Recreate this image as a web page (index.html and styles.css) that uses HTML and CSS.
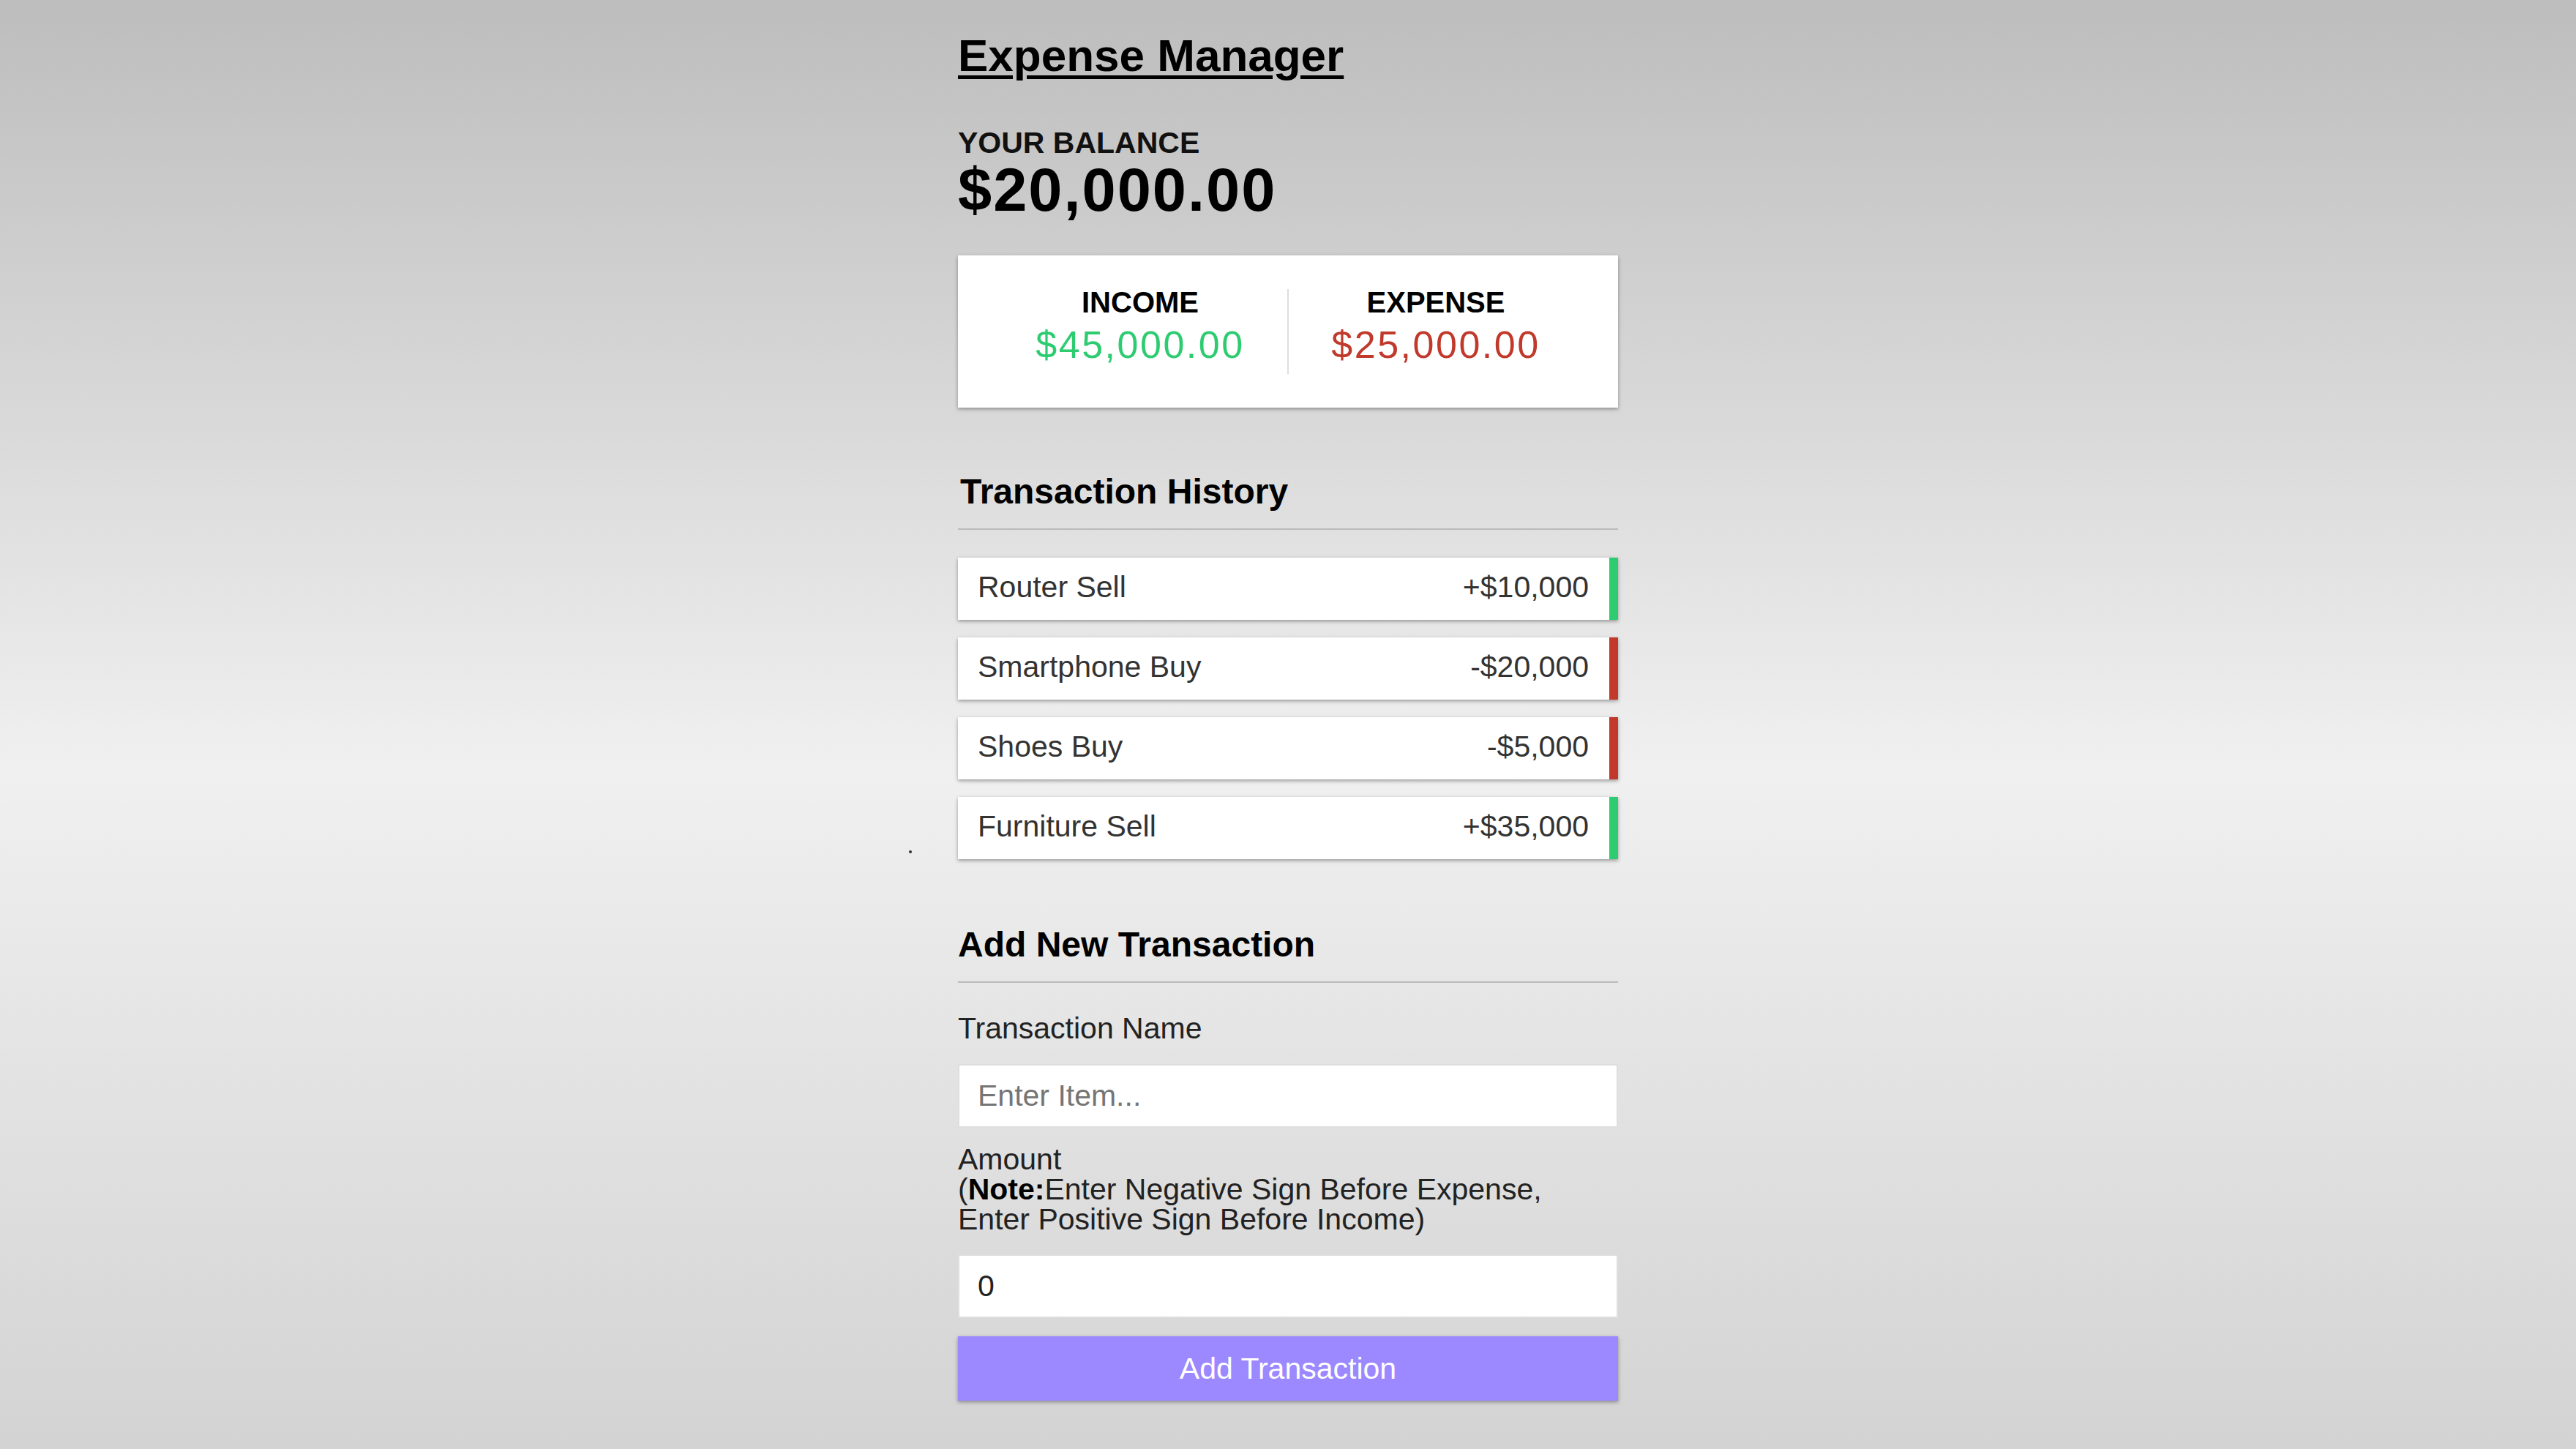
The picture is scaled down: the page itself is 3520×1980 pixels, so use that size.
FILE: index.html
```html
<!DOCTYPE html>
<html lang="en">
<head>
<meta charset="utf-8">
<title>Expense Manager</title>
<link rel="stylesheet" href="styles.css">
</head>
<body>
<span class="speck"></span>
<main class="app">
  <h2 class="app-title">Expense Manager</h2>

  <h4 class="balance-label">YOUR BALANCE</h4>
  <h1 class="balance">$20,000.00</h1>

  <section class="summary">
    <div class="summary-col summary-col--divided">
      <h4 class="summary-label">INCOME</h4>
      <p class="money money--plus">$45,000.00</p>
    </div>
    <div class="summary-col">
      <h4 class="summary-label">EXPENSE</h4>
      <p class="money money--minus">$25,000.00</p>
    </div>
  </section>

  <h3 class="section-title section-title--history">Transaction History</h3>
  <ul class="list">
    <li class="item item--plus"><span>Router Sell</span><span>+$10,000</span></li>
    <li class="item item--minus"><span>Smartphone Buy</span><span>-$20,000</span></li>
    <li class="item item--minus"><span>Shoes Buy</span><span>-$5,000</span></li>
    <li class="item item--plus"><span>Furniture Sell</span><span>+$35,000</span></li>
  </ul>

  <h3 class="section-title section-title--add">Add New Transaction</h3>
  <form class="form">
    <label class="label label--name" for="text">Transaction Name</label>
    <input class="field" type="text" id="text" placeholder="Enter Item...">
    <label class="label label--amount" for="amount"><span class="label-line">Amount</span><span class="label-line">(<b>Note:</b>Enter Negative Sign Before Expense,</span><span class="label-line">Enter Positive Sign Before Income)</span></label>
    <input class="field" type="text" id="amount" value="0">
    <button class="btn" type="button">Add Transaction</button>
  </form>
</main>
</body>
</html>
```
FILE: styles.css
```css
* {
  box-sizing: border-box;
}

html,
body {
  margin: 0;
  padding: 0;
}

body {
  min-height: 100vh;
  background: linear-gradient(to bottom, #bdbdbd 0%, #f0f0f0 53%, #d3d3d3 100%);
  font-family: "Liberation Sans", Arial, sans-serif;
  color: #333;
  overflow: hidden;
}

.speck {
  position: absolute;
  left: 1242px;
  top: 1162px;
  width: 4px;
  height: 4px;
  border-radius: 50%;
  background: #333;
}

.app {
  width: 902px;
  margin: 0 auto;
  padding-top: 41px;
}

.app-title {
  margin: 0;
  font-size: 62px;
  line-height: 70px;
  font-weight: bold;
  color: #000;
  text-decoration: underline;
  text-decoration-thickness: 5px;
  text-underline-offset: 6px;
}

.balance-label {
  margin: 64px 0 0;
  font-size: 41px;
  line-height: 40px;
  font-weight: bold;
  color: #111;
}

.balance {
  margin: 4px 0 0;
  font-size: 83px;
  line-height: 82px;
  font-weight: bold;
  letter-spacing: 2px;
  color: #000;
}

.summary {
  display: flex;
  margin-top: 48px;
  height: 208px;
  padding: 46px 48px;
  background: #fff;
  box-shadow: 0 2px 7px rgba(0, 0, 0, 0.14), 0 2px 4px rgba(0, 0, 0, 0.24);
}

.summary-col {
  flex: 1;
  text-align: center;
}

.summary-col--divided {
  border-right: 2px solid #dedede;
}

.summary-label {
  margin: 0;
  font-size: 40px;
  line-height: 36px;
  font-weight: bold;
  color: #000;
}

.money {
  margin: 0;
  font-size: 52px;
  line-height: 80px;
  letter-spacing: 2.5px;
}

.money--plus {
  color: #2ecc71;
}

.money--minus {
  color: #c0392b;
}

.section-title {
  margin: 0;
  padding-bottom: 24px;
  border-bottom: 2px solid #bbb;
  font-size: 48px;
  line-height: 52px;
  font-weight: bold;
  color: #000;
}

.section-title--history {
  margin-top: 89px;
  padding-left: 3px;
}

.section-title--add {
  margin-top: 91px;
}

.list {
  list-style: none;
  margin: 38px 0 0;
  padding: 0;
  display: flex;
  flex-direction: column;
  gap: 24px;
}

.item {
  display: flex;
  justify-content: space-between;
  height: 85px;
  padding: 20px 28px 24px 27px;
  background: #fff;
  border-right: 12px solid #2ecc71;
  box-shadow: 0 2px 7px rgba(0, 0, 0, 0.14), 0 2px 4px rgba(0, 0, 0, 0.24);
  font-size: 41px;
  line-height: 41px;
  color: #333;
}

.item--minus {
  border-right-color: #c0392b;
}

.form {
  display: flex;
  flex-direction: column;
}

.label {
  display: block;
  font-size: 41px;
  line-height: 41px;
  color: #222;
}

.label-line {
  display: block;
}

.label b {
  color: #000;
}

.label--name {
  margin-top: 42px;
}

.label--amount {
  margin-top: 23px;
}

.field {
  display: block;
  width: 100%;
  height: 87px;
  margin-top: 28px;
  padding: 0 25px;
  border: 2px solid #dedede;
  background: #fff;
  font-family: "Liberation Sans", Arial, sans-serif;
  font-size: 41px;
  color: #222;
  outline: none;
}

.label--amount + .field {
  margin-top: 27px;
}

.field::placeholder {
  color: #757575;
}

.btn {
  display: block;
  width: 100%;
  height: 88px;
  margin-top: 25px;
  border: 0;
  background: #9c88ff;
  box-shadow: 0 2px 7px rgba(0, 0, 0, 0.14), 0 2px 4px rgba(0, 0, 0, 0.24);
  font-family: "Liberation Sans", Arial, sans-serif;
  font-size: 41px;
  color: #fff;
  cursor: pointer;
}
```
